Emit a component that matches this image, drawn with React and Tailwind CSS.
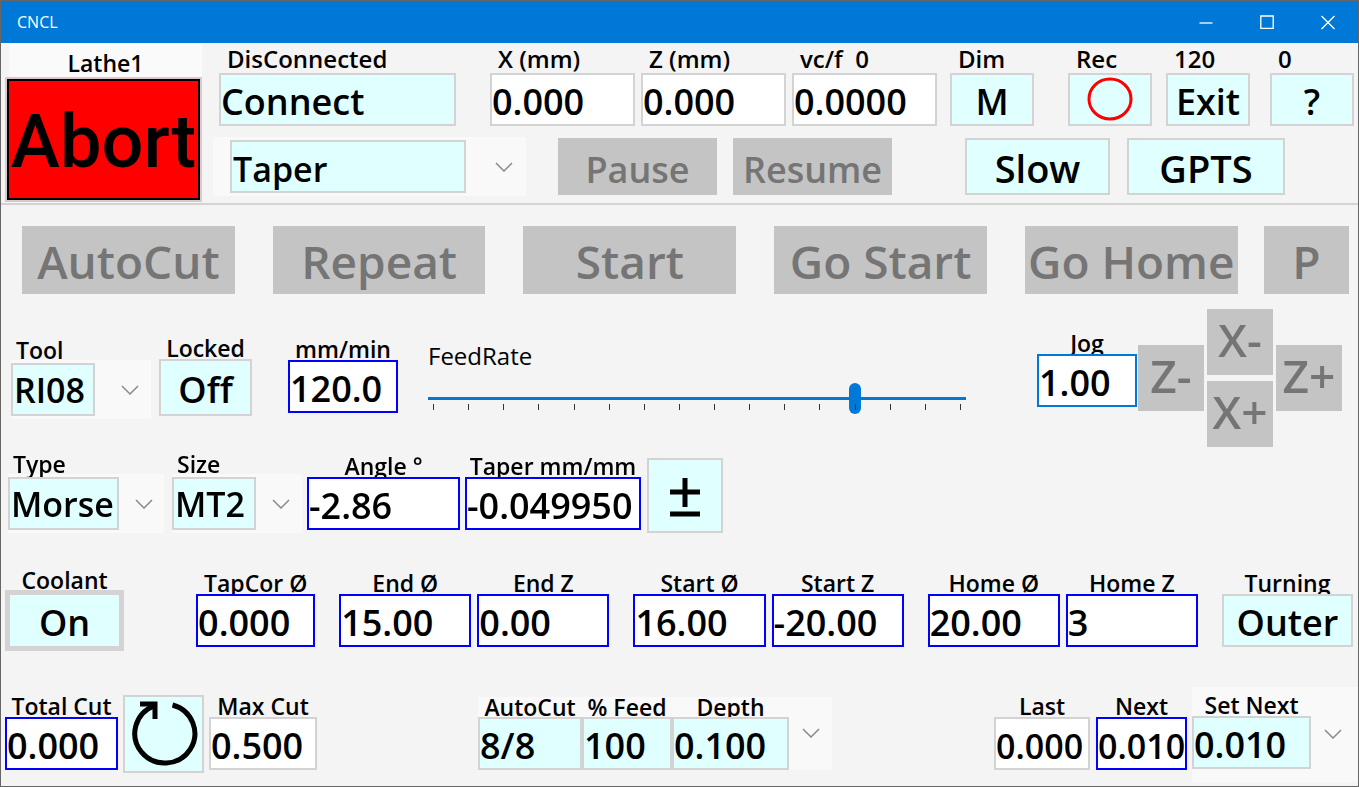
import React, { useId, useState } from "react";
import clsx from "clsx";

const BOX = "block w-full min-w-0 h-[53px] border-2 font-semibold outline-none rounded-none";
const GRAY = "border-[#d3d3d3] bg-white";
const BLUE = "border-[#0000ff] bg-white";
const CYAN = "border-[#d3d3d3] bg-[#e0ffff]";

const Label = ({ htmlFor, className = "h-6 text-[23px] leading-[26px] text-center", children }) => (
  <label htmlFor={htmlFor} className={clsx("block font-semibold whitespace-pre", className)}>
    {children}
  </label>
);

const Field = ({ label, value, tone = BLUE, size = "text-4xl", className, labelClass, ...props }) => {
  const id = useId();
  const [text, setText] = useState(value);

  return (
    <div className={clsx("flex min-w-0 flex-col", className)}>
      <Label htmlFor={id} className={labelClass}>
        {label}
      </Label>
      <input
        id={id}
        type="text"
        value={text}
        onChange={(e) => setText(e.target.value)}
        className={clsx(BOX, tone, size, "pt-1")}
        {...props}
      />
    </div>
  );
};

const PushButton = ({ className, children, ...props }) => (
  <button
    type="button"
    className={clsx("flex w-full min-w-0 items-center justify-center border-2 pt-1 font-semibold whitespace-nowrap", CYAN, className)}
    {...props}
  >
    {children}
  </button>
);

const DisabledButton = ({ className, children }) => (
  <button
    type="button"
    disabled
    className={clsx("flex min-w-0 items-center justify-center bg-[#c4c4c4] font-semibold whitespace-nowrap text-[#757575]", className)}
  >
    {children}
  </button>
);

const Chevron = () => (
  <svg viewBox="0 0 18 10" className="h-[10px] w-[18px] shrink-0" fill="none" stroke="#8a8a8a" strokeWidth="1.5" aria-hidden="true">
    <path d="M1 1l8 8 8-8" />
  </svg>
);

const Dropdown = ({ id, value, className = "pt-1 text-4xl", ...props }) => (
  <select id={id} defaultValue={value} className={clsx(BOX, CYAN, "appearance-none", className)} {...props}>
    <option>{value}</option>
  </select>
);

const Combo = ({ label, value, className, boxClass, chevronClass }) => {
  const id = useId();

  return (
    <div className={clsx("min-w-0", className)}>
      <Label htmlFor={id} className="h-[21px] pl-[5px] text-[23px] leading-[22px]">
        {label}
      </Label>
      <div className="flex items-center bg-[#f9f9f9] py-[3px]">
        <div className={clsx("min-w-0", boxClass)}>
          <Dropdown id={id} value={value} className="px-px text-[34px]" />
        </div>
        <div className={clsx("flex justify-center", chevronClass)}>
          <Chevron />
        </div>
      </div>
    </div>
  );
};

const TitleBar = () => (
  <div className="flex h-[42px] items-center bg-[#0078d7] pl-4 text-white">
    <h1 className="text-base">CNCL</h1>
    <div className="ml-auto flex h-full">
      <button type="button" aria-label="Minimize" className="flex w-[61px] items-center justify-center">
        <svg viewBox="0 0 16 16" className="size-4" fill="none" stroke="currentColor" strokeWidth="1.3">
          <path d="M1.5 9h13" />
        </svg>
      </button>
      <button type="button" aria-label="Maximize" className="flex w-[61px] items-center justify-center">
        <svg viewBox="0 0 16 16" className="size-4" fill="none" stroke="currentColor" strokeWidth="1.3">
          <path d="M1.8 2h12.4v12.4H1.8z" />
        </svg>
      </button>
      <button type="button" aria-label="Close" className="flex w-[61px] items-center justify-center">
        <svg viewBox="0 0 16 16" className="size-4" fill="none" stroke="currentColor" strokeWidth="1.3">
          <path d="M1.5 2l13 13M14.5 2l-13 13" />
        </svg>
      </button>
    </div>
  </div>
);

const topLabel = "h-7 leading-7 pl-2 text-2xl";

const TopButton = ({ label, className, children }) => {
  const id = useId();

  return (
    <div className={clsx("min-w-0", className)}>
      <Label htmlFor={id} className={topLabel}>
        {label}
      </Label>
      <PushButton id={id} className="h-[53px] text-4xl">
        {children}
      </PushButton>
    </div>
  );
};

const Header = () => (
  <header className="flex border-b-2 border-[#d3d3d3] pr-1 pb-px pl-1">
    <div className="min-w-0 flex-[197]">
      <div className="ml-1 bg-[#fafafa] pt-[7px] text-center text-[23px] leading-[27px] font-semibold">Lathe1</div>
      <button
        type="button"
        className="flex h-[125px] w-full items-center justify-center border-2 border-[#dcc8c8] bg-[#ff0000] pt-1 ring-2 ring-black ring-inset"
      >
        <span className="font-['Roboto','Open_Sans',sans-serif] text-[74px] leading-none font-medium">Abort</span>
      </button>
    </div>

    <div className="min-w-0 flex-[1152] pt-0.5">
      <div className="flex pl-[17px]">
        <div className="min-w-0 flex-[237]">
          <Label htmlFor="connect" className={topLabel}>
            DisConnected
          </Label>
          <PushButton id="connect" className="h-[53px] justify-start text-4xl">
            Connect
          </PushButton>
        </div>
        <Field label="X (mm)" value="0.000" tone={GRAY} className="ml-[34px] flex-[145]" labelClass={topLabel} />
        <Field label="Z (mm)" value="0.000" tone={GRAY} className="ml-1.5 flex-[145]" labelClass={topLabel} />
        <Field label="vc/f  0" value="0.0000" tone={GRAY} className="ml-1.5 flex-[145]" labelClass={topLabel} />
        <TopButton label="Dim" className="ml-[13px] flex-[84]">
          M
        </TopButton>
        <TopButton label="Rec" className="ml-[34px] flex-[84]">
          <svg viewBox="0 0 46 44" className="-mt-1.5 h-[44px] w-[46px]" fill="none" stroke="#ff0000" strokeWidth="3" role="img" aria-label="Record">
            <ellipse cx="23" cy="22" rx="21" ry="20" />
          </svg>
        </TopButton>
        <TopButton label="120" className="ml-3.5 flex-[84]">
          Exit
        </TopButton>
        <TopButton label="0" className="ml-5 flex-[84]">
          ?
        </TopButton>
      </div>

      <div className="mt-[11px] flex items-center pl-[11px]">
        <div className="flex flex-[296] items-center bg-[#f9f9f9] py-[3px] pl-[17px]">
          <div className="min-w-0 flex-[236]">
            <Dropdown value="Taper" aria-label="Operation" className="px-px pt-0.5 text-[34px]" />
          </div>
          <div className="flex flex-[44] justify-center pl-4">
            <Chevron />
          </div>
        </div>
        <DisabledButton className="ml-8 h-[57px] flex-[159] pt-1.5 text-4xl">Pause</DisabledButton>
        <DisabledButton className="ml-4 h-[57px] flex-[159] pt-1.5 text-4xl">Resume</DisabledButton>
        <div className="ml-[73px] flex-[145]">
          <PushButton className="h-[57px] text-[38px]">Slow</PushButton>
        </div>
        <div className="mr-[69px] ml-[17px] flex-[158]">
          <PushButton className="h-[57px] text-[38px]">GPTS</PushButton>
        </div>
      </div>
    </div>
  </header>
);

const Actions = () => (
  <section className="mt-[21px] flex pr-[9px] pl-[21px]">
    <DisabledButton className="h-[68px] flex-[212] pt-0.5 text-[46px]">AutoCut</DisabledButton>
    <DisabledButton className="ml-[38px] h-[68px] flex-[212] pt-0.5 text-[46px]">Repeat</DisabledButton>
    <DisabledButton className="ml-[38px] h-[68px] flex-[212] pt-0.5 text-[46px]">Start</DisabledButton>
    <DisabledButton className="ml-[38px] h-[68px] flex-[212] pt-0.5 text-[46px]">Go Start</DisabledButton>
    <DisabledButton className="ml-[38px] h-[68px] flex-[212] pt-0.5 text-[46px]">Go Home</DisabledButton>
    <DisabledButton className="ml-[26px] h-[68px] flex-[85] pt-0.5 text-[46px]">P</DisabledButton>
  </section>
);

const TICKS = Array.from({ length: 16 }, (_, i) => i);

const FeedRate = () => {
  const [rate, setRate] = useState(120);

  return (
    <div className="mt-[31px] ml-[30px] min-w-0 flex-[538]">
      <label htmlFor="feedrate" className="block text-2xl leading-8">
        FeedRate
      </label>
      <input
        id="feedrate"
        type="range"
        min="0"
        max="150"
        value={rate}
        onChange={(e) => setRate(Number(e.target.value))}
        className="mt-2.5 block h-8 w-full appearance-none bg-transparent [&::-webkit-slider-runnable-track]:h-[3px] [&::-webkit-slider-runnable-track]:bg-[#0078d7] [&::-webkit-slider-thumb]:mt-[-14px] [&::-webkit-slider-thumb]:h-[31px] [&::-webkit-slider-thumb]:w-3 [&::-webkit-slider-thumb]:appearance-none [&::-webkit-slider-thumb]:rounded-full [&::-webkit-slider-thumb]:bg-[#0078d7]"
      />
      <div className="-mt-[10px] flex justify-between px-[5px]">
        {TICKS.map((t) => (
          <span key={t} className="h-1.5 w-px bg-[#333]" />
        ))}
      </div>
    </div>
  );
};

const JogPad = () => (
  <div className="ml-px flex flex-[204] items-center gap-[3px]">
    <DisabledButton className="h-[66px] flex-1 pb-1.5 text-[46px]">Z-</DisabledButton>
    <div className="flex flex-1 flex-col gap-1.5">
      <DisabledButton className="h-[66px] pb-1.5 text-[46px]">X-</DisabledButton>
      <DisabledButton className="h-[66px] pb-1.5 text-[46px]">X+</DisabledButton>
    </div>
    <DisabledButton className="h-[66px] flex-1 pb-1.5 text-[46px]">Z+</DisabledButton>
  </div>
);

const ToolRow = () => (
  <section className="mt-[15px] flex items-start pr-4 pl-2.5">
    <Combo label="Tool" value="RI08" className="mt-[30px] flex-[140]" boxClass="flex-[84]" chevronClass="flex-[42] pl-3.5" />
    <div className="mt-[26px] ml-2 min-w-0 flex-[93]">
      <Label htmlFor="locked">Locked</Label>
      <PushButton id="locked" className="h-[57px] text-4xl">
        Off
      </PushButton>
    </div>
    <Field label="mm/min" value="120.0" className="mt-[27px] ml-9 flex-[110]" />
    <FeedRate />
    <Field label="Jog" value="1.00" tone="border-[#0078d7] bg-white" className="mt-[21px] ml-[71px] flex-[100]" autoFocus />
    <JogPad />
  </section>
);

const TaperRow = () => (
  <section className="mt-1.5 flex items-start pl-[7px]">
    <Combo label="Type" value="Morse" className="flex-[156]" boxClass="flex-[111]" chevronClass="flex-[41] pl-1" />
    <Combo label="Size" value="MT2" className="ml-2 flex-[130]" boxClass="flex-[84]" chevronClass="flex-[42] pl-1" />
    <Field label="Angle °" value="-2.86" className="ml-[5px] flex-[153]" />
    <Field label="Taper mm/mm" value="-0.049950" className="ml-[5px] flex-[176]" />
    <div className="mt-[5px] ml-1.5 flex-[76]">
      <PushButton aria-label="Change sign" className="h-[75px]">
        <svg viewBox="0 0 34 42" className="h-[42px] w-[34px]" stroke="#000" strokeWidth="5" aria-hidden="true">
          <path d="M2 15h30M17 1v29M2 37h30" />
        </svg>
      </PushButton>
    </div>
    <div className="flex-[635]" />
  </section>
);

const PositionRow = () => (
  <section className="mt-[37px] flex items-start gap-6 pr-[5px] pl-1">
    <div className="mr-12 flex-[119]">
      <Label htmlFor="coolant" className="h-5 text-center text-[23px] leading-5">
        Coolant
      </Label>
      <button id="coolant" type="button" className="h-[61px] w-full border-[5px] border-[#d3d3d3] bg-[#e0ffff] pt-1 text-4xl font-semibold">
        On
      </button>
    </div>
    <Field label="TapCor Ø" value="0.000" className="flex-[119]" />
    <div className="flex flex-[270] gap-1.5">
      <Field label="End Ø" value="15.00" className="flex-1" />
      <Field label="End Z" value="0.00" className="flex-1" />
    </div>
    <div className="flex flex-[270] gap-1.5">
      <Field label="Start Ø" value="16.00" className="flex-1" />
      <Field label="Start Z" value="-20.00" className="flex-1" />
    </div>
    <div className="flex flex-[270] gap-1.5">
      <Field label="Home Ø" value="20.00" className="flex-1" />
      <Field label="Home Z" value="3" className="flex-1" />
    </div>
    <div className="flex min-w-0 flex-[131] flex-col">
      <Label htmlFor="turning">Turning</Label>
      <PushButton id="turning" className="h-[53px] text-4xl">
        Outer
      </PushButton>
    </div>
  </section>
);

const shortLabel = "h-5 leading-5 text-center text-[23px]";

const CutRow = () => (
  <section className="mt-9 flex items-start pb-1 pl-1">
    <Field label="Total Cut" value="0.000" className="mt-1.5 flex-[113]" />
    <div className="mt-2 ml-[5px] flex-[81]">
      <PushButton aria-label="Reset total cut" className="h-[78px] pb-1">
        <svg viewBox="0 0 72 72" className="size-[72px]" fill="none" stroke="#000" strokeWidth="5" aria-hidden="true">
          <path d="M44.5 7A30 29.5 0 1 1 26 8" />
          <path d="M12 6h15v15" />
        </svg>
      </PushButton>
    </div>
    <Field label="Max Cut" value="0.500" tone={GRAY} className="mt-1.5 ml-[5px] flex-[108]" />

    <div className="mt-2.5 ml-[161px] flex flex-[354] items-end bg-[#f9f9f9]">
      <Field label="AutoCut" value="8/8" tone={CYAN} className="flex-[104]" labelClass={shortLabel} />
      <Field label="% Feed" value="100" tone={CYAN} className="flex-[90]" labelClass={shortLabel} />
      <div className="flex min-w-0 flex-[117] flex-col">
        <Label htmlFor="depth" className={shortLabel}>
          Depth
        </Label>
        <Dropdown id="depth" value="0.100" />
      </div>
      <div className="flex flex-[43] justify-center pb-8">
        <Chevron />
      </div>
    </div>

    <Field label="Last" value="0.000" tone={GRAY} size="text-[34px]" className="mt-1.5 ml-[162px] flex-[96]" />
    <Field label="Next" value="0.010" size="text-[34px]" className="mt-1.5 ml-1.5 flex-[91]" />
    <div className="ml-[5px] flex h-[95px] flex-[166] items-start bg-[#f9f9f9] pt-[5px]">
      <div className="min-w-0 flex-[119]">
        <Label htmlFor="setnext">Set Next</Label>
        <Dropdown id="setnext" value="0.010" />
      </div>
      <div className="flex flex-[43] justify-center pt-[37px] pr-1">
        <Chevron />
      </div>
    </div>
  </section>
);

export default function App() {
  return (
    <div className="min-h-screen border border-[#666] bg-[#f4f4f4] font-['Open_Sans','Noto_Sans',sans-serif] text-black">
      <TitleBar />
      <Header />
      <main>
        <Actions />
        <ToolRow />
        <TaperRow />
        <PositionRow />
        <CutRow />
      </main>
    </div>
  );
}
